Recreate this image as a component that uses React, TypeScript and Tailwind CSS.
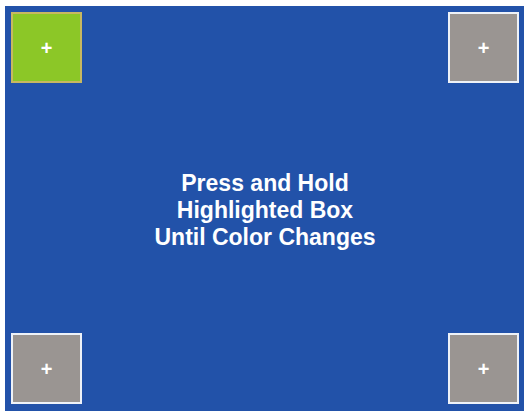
const font = { fontFamily: '"Liberation Sans", Arial, sans-serif' };

function HoldBox({ active }: { active?: boolean }) {
  return (
    <div
      className={
        'w-[71px] h-[71px] flex items-center justify-center text-white font-bold text-[20px] border-2 ' +
        (active ? 'bg-[#8cc727] border-[#c8b860]' : 'bg-[#9a9592] border-[#eef2f8]')
      }
    >
      +
    </div>
  );
}

export default function App() {
  return (
    <div className="w-[532px] h-[415px] bg-white pt-[6px] pl-[5px]" style={font}>
      <div className="w-[519px] h-[405px] bg-[#2252a9] pt-[6px] pb-[7px] pl-[6px] pr-[5px] flex flex-col justify-between">
        <div className="flex justify-between">
          <HoldBox active />
          <HoldBox />
        </div>
        <div className="text-center text-white font-bold text-[23px] leading-[27px] pt-[4px]">
          <div>Press and Hold</div>
          <div>Highlighted Box</div>
          <div>Until Color Changes</div>
        </div>
        <div className="flex justify-between">
          <HoldBox />
          <HoldBox />
        </div>
      </div>
    </div>
  );
}
